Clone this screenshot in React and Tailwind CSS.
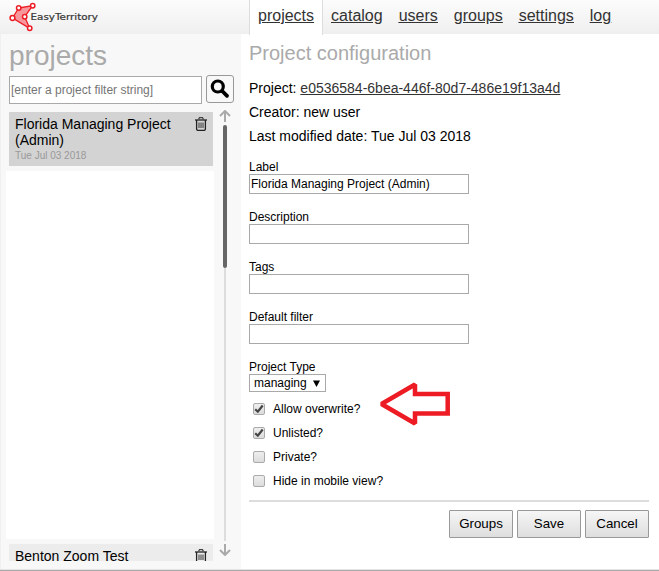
import React, { useState } from 'react';

const navItems = ['catalog', 'users', 'groups', 'settings', 'log'];

const textFields = [
  { key: 'label', title: 'Label' },
  { key: 'description', title: 'Description' },
  { key: 'tags', title: 'Tags' },
  { key: 'filter', title: 'Default filter' }
];

const options = [
  { key: 'overwrite', title: 'Allow overwrite?' },
  { key: 'unlisted', title: 'Unlisted?' },
  { key: 'private', title: 'Private?' },
  { key: 'mobile', title: 'Hide in mobile view?' }
];

const Logo = () => (
  <div className="flex w-[249px] pl-2">
    <svg width="92" height="34" viewBox="0 0 92 34">
      <path d="M10.7 8 L24.7 5.7 L16.7 16.7 L21.7 28.3 L4.5 18 Z" fill="#f7979b" stroke="#ed1c24" strokeWidth="1.3" />
      <g fill="#fff" stroke="#ed1c24" strokeWidth="1.5">
        <circle cx="10.7" cy="8" r="2.2" />
        <circle cx="24.7" cy="5.7" r="2.2" />
        <circle cx="4.5" cy="18" r="2.4" />
        <circle cx="16.7" cy="16.7" r="2.2" />
        <circle cx="21.7" cy="28.3" r="2.2" />
      </g>
      <text x="22.5" y="19.7" fontFamily="DejaVu Sans, sans-serif" fontSize="9.4" fill="#333" stroke="#333" strokeWidth="0.2" textLength="67.5" lengthAdjust="spacingAndGlyphs">EasyTerritory</text>
    </svg>
  </div>
);

const TrashIcon = () => (
  <svg className="mt-[5px] shrink-0" width="12" height="14" viewBox="0 0 12 14" fill="none" stroke="#222">
    <path d="M0 3 H12" strokeWidth="1.3" />
    <path d="M3.5 2.5 L4.5 0.7 H7.5 L8.5 2.5" stroke="#444" strokeWidth="1.3" />
    <path d="M1.6 3 V12 Q1.6 13.4 3 13.4 H9 Q10.4 13.4 10.4 12 V3" strokeWidth="1.3" />
    <path d="M4 5.5 V11 M6 5.5 V11 M8 5.5 V11" stroke="#333" />
  </svg>
);

const Arrow = ({ down }) => (
  <svg className={down ? 'rotate-180' : ''} width="12" height="12" viewBox="0 0 12 12" fill="none" stroke="#aaa" strokeWidth="2">
    <path d="M6 12 V1 M1 6 L6 1 L11 6" />
  </svg>
);

const Sidebar = () => (
  <aside className="flex h-[535px] w-[241px] shrink-0 flex-col border-l border-[#f0f0f0] bg-[#f8f8f8] pl-2">
    <h1 className="mt-[6px] h-[35px] text-[28px] leading-8 text-[#aaa]">projects</h1>
    <div className="flex items-start gap-1">
      <input
        className="mt-px h-7 w-[193px] border border-[#a9a9a9] bg-white px-px text-xs outline-none placeholder:text-[#757575]"
        placeholder="[enter a project filter string]"
      />
      <button className="flex h-7 w-7 items-center justify-center rounded-[3px] border border-[#999] bg-[#f8f8f8]">
        <svg width="20" height="20" viewBox="0 0 20 20" fill="none" stroke="#000">
          <circle cx="7.8" cy="7.5" r="5.5" strokeWidth="3.2" />
          <path d="M12.2 12 L17 16.8" strokeWidth="3.8" strokeLinecap="round" />
        </svg>
      </button>
    </div>

    <div className="mt-[6px] flex h-[452px]">
      {/* project list, the last row is clipped */}
      <div className="-ml-[3px] mt-[2px] h-[449px] w-[208px] overflow-hidden">
        <div className="ml-[3px] flex h-[54px] w-[204px] justify-between bg-[#d3d3d3] pl-[6px] pr-[6px]">
          <div className="pt-1">
            <p className="w-[165px] text-sm leading-4">Florida Managing Project (Admin)</p>
            <p className="mt-[2px] text-[10px] leading-3 text-[#999]">Tue Jul 03 2018</p>
          </div>
          <TrashIcon />
        </div>
        <div className="my-[5px] h-[368px] bg-white" />
        <div className="ml-[3px] flex h-[54px] w-[204px] justify-between bg-[#ececec] pl-[6px] pr-[6px]">
          <p className="pt-1 text-sm leading-4">Benton Zoom Test</p>
          <TrashIcon />
        </div>
      </div>

      {/* scrollbar */}
      <div className="ml-[5px] flex w-3 flex-col items-center">
        <Arrow />
        <div className="mt-[3px] h-[143px] w-1 rounded-full bg-[#666]" />
        <div className="h-[273px] w-[2px] bg-[#ddd]" />
        <div className="mt-[3px]"><Arrow down /></div>
      </div>
    </div>
  </aside>
);

const CheckBox = ({ checked, onChange, title }) => (
  <label className="flex h-6 items-center text-xs">
    <input type="checkbox" className="sr-only" checked={checked} onChange={onChange} />
    <span className="mr-2 flex h-3 w-3 items-center justify-center rounded-[2px] border border-[#aaa] bg-linear-to-b from-[#eee] to-[#dcdcdc]">
      {checked && (
        <svg className="shrink-0" width="10" height="10" viewBox="0 0 10 10" fill="none" stroke="#444" strokeWidth="2.2">
          <path d="M1.2 5.2 L3.8 7.7 L8.7 1.5" />
        </svg>
      )}
    </span>
    {title}
  </label>
);

const App = () => {
  const [values, setValues] = useState({
    label: 'Florida Managing Project (Admin)',
    description: '',
    tags: '',
    filter: ''
  });
  const [flags, setFlags] = useState({ overwrite: true, unlisted: true, private: false, mobile: false });

  return (
    <div className="flex h-[571px] w-[659px] flex-col overflow-hidden bg-white font-['Liberation_Sans',Arial,sans-serif] text-black">
      <header className="flex h-[34px] shrink-0 bg-linear-to-b from-[#fcfcfc] to-[#efefef]">
        <Logo />
        <nav className="flex text-base leading-[31px] text-[#333] underline underline-offset-1">
          <a className="h-[35px] border-x border-[#ddd] bg-white px-2">projects</a>
          {navItems.map(item => (
            <a key={item} className="px-2">{item}</a>
          ))}
        </nav>
      </header>

      <div className="flex h-[535px]">
        <Sidebar />

        <main className="w-[408px] pl-2">
          <h2 className="mt-[7px] h-[35px] text-xl leading-6 text-[#aaa]">Project configuration</h2>
          <div className="text-sm leading-6">
            <p>Project: <a className="text-[#333] underline underline-offset-1">e0536584-6bea-446f-80d7-486e19f13a4d</a></p>
            <p>Creator: new user</p>
            <p>Last modified date: Tue Jul 03 2018</p>
          </div>

          <div className="mt-3">
            {textFields.map(field => (
              <label key={field.key} className="block h-[50px] text-xs leading-[15px]">
                <span className="block h-[14px]">{field.title}</span>
                <input
                  className="block h-5 w-[220px] border border-[#a9a9a9] px-px text-xs outline-none"
                  value={values[field.key]}
                  onChange={(e) => setValues({ ...values, [field.key]: e.target.value })}
                />
              </label>
            ))}
            <div className="h-[14px] text-xs leading-[15px]">Project Type</div>
            <button className="flex h-[18px] w-[77px] items-center border border-[#a9a9a9] bg-white pl-1 text-xs">
              managing
              <svg className="ml-[6px]" width="7" height="7" viewBox="0 0 7 7">
                <path d="M0 0.5 H7 L3.5 7 Z" fill="#000" />
              </svg>
            </button>
          </div>

          <div className="relative mt-[5px] pl-1">
            {options.map(option => (
              <CheckBox
                key={option.key}
                title={option.title}
                checked={flags[option.key]}
                onChange={() => setFlags({ ...flags, [option.key]: !flags[option.key] })}
              />
            ))}
            {/* callout arrow */}
            <svg className="absolute -top-[15px] left-[130px]" width="74" height="46" viewBox="0 0 74 46">
              <path d="M2.5 22 L36 2.5 V12 H68.7 V31.5 H36 V41.5 Z" fill="none" stroke="#ed1c24" strokeWidth="4.5" strokeMiterlimit="1.5" />
            </svg>
          </div>

          <div className="mt-[7px] flex justify-end gap-1 border-t-2 border-[#ddd] pt-2 text-[13.33px]">
            {['Groups', 'Save', 'Cancel'].map(name => (
              <button key={name} className="h-7 w-16 rounded-[1px] border border-[#999] bg-linear-to-b from-[#f6f6f6] to-[#dedede]">
                {name}
              </button>
            ))}
          </div>
        </main>
      </div>
      <div className="h-[2px] border-b border-[#aaa] bg-[#e4e4e4]" />
    </div>
  );
};

export default App;
